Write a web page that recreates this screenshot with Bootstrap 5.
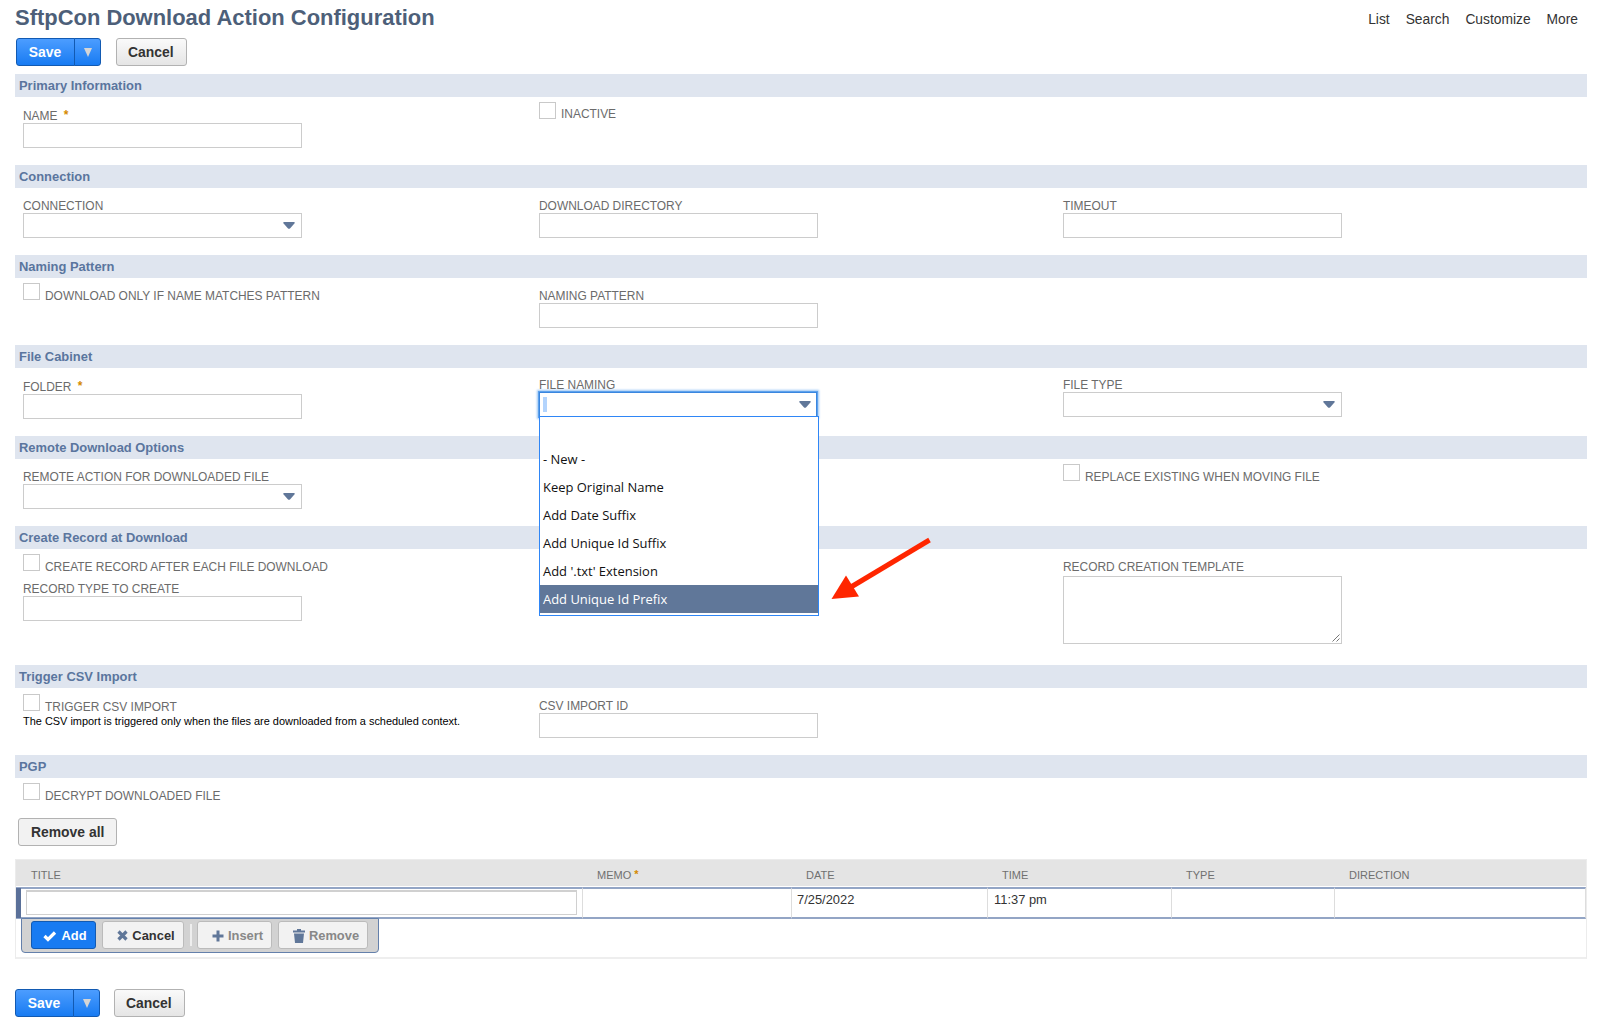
<!DOCTYPE html>
<html lang="en">
<head>
    <meta charset="UTF-8">
    <meta name="viewport" content="width=device-width, initial-scale=1.0">
    <title>SftpCon Download Action Configuration</title>
    <link href="https://cdn.jsdelivr.net/npm/bootstrap@5.3.1/dist/css/bootstrap.min.css" rel="stylesheet">
    <style>
        body { font-family: "Liberation Sans", Arial, sans-serif; font-size: 13px; color: #333; background: #fff; overflow: hidden; }
        .page { width: 1572px; margin-left: 15px; }
        .page-top { height: 38px; }
        .page-title { font-size: 21.95px; font-weight: bold; color: #4d5f79; line-height: 26px; padding-top: 5px; }
        .top-links { font-size: 13.8px; gap: 16px; padding: 11px 9px 0 0; line-height: 18px; }
        .top-links a { color: #333; text-decoration: none; }

        /* buttons */
        .ns-btn { height: 28px; padding: 0 12px 0 11px; border: 1px solid #b2b2b2; border-radius: 3px; font-size: 13.9px; font-weight: bold; line-height: 26px; color: #333; background: linear-gradient(#fafafa, #e5e5e5); }
        .ns-btn.flat { background: #f2f2f2; margin-left: 3px; padding: 0 12px; }
        .ns-save { color: #fff; border-color: #125ab2; background: linear-gradient(#4c9dff, #187bf2); }
        .ns-save.part-main { border-radius: 3px 0 0 3px; width: 59px; }
        .ns-save.part-arrow { border-radius: 0 3px 3px 0; width: 27px; margin-left: -1px; padding: 1px 0 0; }
        .save-row { gap: 15px; }
        .save-row.top { height: 36px; padding-left: 1px; }
        .save-row.bottom { margin-top: 30px; gap: 14px; }

        /* sections */
        .sec-bar { height: 23px; padding-left: 4px; background: #dfe5ef; color: #5a759e; font-size: 12.93px; font-weight: bold; line-height: 23px; }
        .sec-body { display: grid; grid-template-columns: 516px 524px 1fr; padding-left: 8px; height: 67px; }
        .sec-body.plus { height: 68px; }
        .sec-body.tall { height: 116px; }
        .sec-body.last { height: 40px; }
        .fld { padding-top: 10px; width: 279px; }
        .plus .fld { padding-top: 9px; }
        .plus .fld.req { padding-top: 11px; }
        .fld label { display: block; height: 15px; line-height: 16px; font-size: 11.95px; color: #6b6b6b; white-space: nowrap; }
        .star { color: #d48a00; font-weight: bold; margin-left: 3px; position: relative; top: -1px; }
        .box { height: 25px; border: 1px solid #ccc; background: #fff; }
        .box.pick { display: flex; align-items: center; justify-content: flex-end; padding-right: 6px; }
        .box.focus { border-color: #3a86df; box-shadow: 0 0 0 1px #5ea2ec, 0 0 2px 2px #9cc6f5; justify-content: space-between; padding: 0 5px 0 3px; width: 278px; }
        .sel-mark { width: 4px; height: 15px; background: #b3d4fd; }
        .area { height: 68px; margin-top: 2px; display: flex; align-items: flex-end; justify-content: flex-end; padding: 0 1px 1px 0; }
        .chk { display: flex; padding-top: 5px; height: 22px; gap: 5px; }
        .chk.low { padding-top: 6px; height: 23px; }
        .chk i { width: 17px; height: 17px; border: 1px solid #c9c9c9; flex: none; }
        .chk span { font-size: 11.95px; color: #6b6b6b; line-height: 16px; padding-top: 5px; white-space: nowrap; }
        .plus .chk span { padding-top: 4px; }
        .fld.below { padding-top: 10px; }
        .help { font-size: 10.95px; line-height: 13px; color: #000; white-space: nowrap; padding-top: 4px; }

        /* open list */
        .list-open { position: absolute; z-index: 5; left: 0; top: 48px; width: 280px; height: 200px; border: 1px solid #2f86f6; background: #fff; font-family: "Open Sans", sans-serif; font-size: 12.96px; color: #111; }
        .list-open div { height: 28px; line-height: 28px; padding-left: 3px; white-space: nowrap; }
        .list-open .on { background: #607799; color: #fff; }
        .pointer { position: absolute; z-index: 6; left: 290px; top: 168px; }

        /* sublist */
        .sublist { width: 1572px; height: 100px; margin-top: 13px; border: 1px solid #ececec; border-bottom: 2px solid #eee; }
        .line-row { display: grid; grid-template-columns: 567px 209px 196px 184px 163px 251px; }
        .line-head { height: 26px; background: #e4e4e4; color: #707070; font-size: 11px; line-height: 30px; margin-bottom: 1px; }
        .line-head div { padding-left: 14px; white-space: nowrap; }
        .line-head div:first-child { padding-left: 15px; }
        .line-edit { height: 32px; background: #fff; }
        .line-edit > div { border-top: 2px solid #93a5c5; border-bottom: 2px solid #93a5c5; border-right: 1px solid #ddd; padding: 3px 0 0 5px; line-height: 15px; font-size: 12.9px; }
        .line-edit > div:nth-child(4) { padding-left: 6px; }
        .line-edit > div:first-child { padding: 1px 5px 0 5px; position: relative; }
        .line-edit > div:first-child::before { content: ""; position: absolute; left: 0; top: -1px; bottom: -1px; width: 5px; background: #5a7099; }
        .line-edit .box { margin-left: 5px; height: 25px; border-color: #d0d0d0; border-top-width: 2px; }
        .line-tools { width: 358px; height: 35px; margin: -1px 0 0 5px; padding: 2px 0 0 9px; background: #d2d2d2; border: 1px solid #6480ab; border-radius: 0 0 4px 4px; position: relative; }
        .line-tools .ns-btn { display: flex; align-items: center; font-size: 12.9px; background: #f2f2f2; border-color: #bbb; white-space: nowrap; padding: 1px 0 0 6px; justify-content: center; }
        .line-tools .ns-btn.add { background: #187bf2; border-color: #125ab2; padding-left: 3px; }
        .line-tools .dim { color: #888; }
        .line-tools .sep { width: 2px; height: 22px; background: #eee; margin: 3px 5px 0 6px; }
    </style>
</head>
<body>
<svg class="d-none">
    <symbol id="caret" viewBox="0 0 12 7"><path d="M1 0H11Q12.3 .2 11.4 1.6L7.2 6.2Q6 7.4 4.8 6.2L.6 1.6Q-.3 .2 1 0Z" fill="#607799"/></symbol>
    <symbol id="down" viewBox="0 0 8 9"><path d="M0 0H8L4 9Z" fill="#d5d5d5"/></symbol>
</svg>

<div class="page">
    <div class="page-top d-flex justify-content-between">
        <h1 class="page-title mb-0">SftpCon Download Action Configuration</h1>
        <nav class="top-links d-flex"><a href="#">List</a><a href="#">Search</a><a href="#">Customize</a><a href="#">More</a></nav>
    </div>
    <div class="save-row top d-flex">
        <div class="d-flex">
            <button class="ns-btn ns-save part-main">Save</button>
            <button class="ns-btn ns-save part-arrow d-flex align-items-center justify-content-center"><svg width="8" height="9"><use href="#down"/></svg></button>
        </div>
        <button class="ns-btn">Cancel</button>
    </div>

    <div class="sec-bar">Primary Information</div>
    <div class="sec-body plus">
        <div class="fld req"><label>NAME <span class="star">*</span></label><div class="box"></div></div>
        <div class="chk"><i></i><span>INACTIVE</span></div>
    </div>

    <div class="sec-bar">Connection</div>
    <div class="sec-body">
        <div class="fld"><label>CONNECTION</label><div class="box pick"><svg width="12" height="7"><use href="#caret"/></svg></div></div>
        <div class="fld"><label>DOWNLOAD DIRECTORY</label><div class="box"></div></div>
        <div class="fld"><label>TIMEOUT</label><div class="box"></div></div>
    </div>

    <div class="sec-bar">Naming Pattern</div>
    <div class="sec-body">
        <div class="chk"><i></i><span>DOWNLOAD ONLY IF NAME MATCHES PATTERN</span></div>
        <div class="fld"><label>NAMING PATTERN</label><div class="box"></div></div>
    </div>

    <div class="sec-bar">File Cabinet</div>
    <div class="sec-body plus">
        <div class="fld req"><label>FOLDER <span class="star">*</span></label><div class="box"></div></div>
        <div class="fld position-relative">
            <label>FILE NAMING</label>
            <div class="box pick focus"><span class="sel-mark"></span><svg width="12" height="7"><use href="#caret"/></svg></div>
            <div class="list-open">
                <div></div>
                <div>- New -</div>
                <div>Keep Original Name</div>
                <div>Add Date Suffix</div>
                <div>Add Unique Id Suffix</div>
                <div>Add '.txt' Extension</div>
                <div class="on">Add Unique Id Prefix</div>
            </div>
            <svg class="pointer" width="106" height="70"><path d="M100.500 4L22 51" stroke="#ff2600" stroke-width="5"/><path d="M2.500 63L17 39.500L30 60.500Z" fill="#ff2600"/></svg>
        </div>
        <div class="fld"><label>FILE TYPE</label><div class="box pick"><svg width="12" height="7"><use href="#caret"/></svg></div></div>
    </div>

    <div class="sec-bar">Remote Download Options</div>
    <div class="sec-body">
        <div class="fld"><label>REMOTE ACTION FOR DOWNLOADED FILE</label><div class="box pick"><svg width="12" height="7"><use href="#caret"/></svg></div></div>
        <div></div>
        <div class="chk"><i></i><span>REPLACE EXISTING WHEN MOVING FILE</span></div>
    </div>

    <div class="sec-bar">Create Record at Download</div>
    <div class="sec-body tall">
        <div>
            <div class="chk"><i></i><span>CREATE RECORD AFTER EACH FILE DOWNLOAD</span></div>
            <div class="fld below"><label>RECORD TYPE TO CREATE</label><div class="box"></div></div>
        </div>
        <div></div>
        <div class="fld"><label>RECORD CREATION TEMPLATE</label>
            <div class="box area"><svg width="8" height="8"><path d="M.5 7.500L7.500 .5M4.500 7.500L7.500 4.500" stroke="#777" fill="none"/></svg></div>
        </div>
    </div>

    <div class="sec-bar">Trigger CSV Import</div>
    <div class="sec-body">
        <div>
            <div class="chk low"><i></i><span>TRIGGER CSV IMPORT</span></div>
            <div class="help">The CSV import is triggered only when the files are downloaded from a scheduled context.</div>
        </div>
        <div class="fld"><label>CSV IMPORT ID</label><div class="box"></div></div>
    </div>

    <div class="sec-bar">PGP</div>
    <div class="sec-body last">
        <div class="chk"><i></i><span>DECRYPT DOWNLOADED FILE</span></div>
    </div>
    <button class="ns-btn flat d-block">Remove all</button>

    <div class="sublist">
        <div class="line-row line-head">
            <div>TITLE</div><div>MEMO<span class="star ms-0"> *</span></div><div>DATE</div><div>TIME</div><div>TYPE</div><div>DIRECTION</div>
        </div>
        <div class="line-row line-edit">
            <div><div class="box"></div></div><div></div><div>7/25/2022</div><div>11:37 pm</div><div></div><div></div>
        </div>
        <div class="line-tools d-flex">
            <button class="ns-btn ns-save add" style="width:65px"><svg class="me-1" width="14" height="12"><path d="M1.500 6L5 9.500L12 2.500" stroke="#fff" stroke-width="3.200" fill="none"/></svg>Add</button>
            <button class="ns-btn" style="width:82px;margin-left:6px"><svg class="me-1" width="11" height="11"><path d="M1.500 1.500L9.500 9.500M9.500 1.500L1.500 9.500" stroke="#607799" stroke-width="3.200"/></svg>Cancel</button>
            <span class="sep"></span>
            <button class="ns-btn dim" style="width:75px"><svg class="me-1" width="12" height="12"><path d="M6 .5V11.500M.5 6H11.500" stroke="#607799" stroke-width="3"/></svg>Insert</button>
            <button class="ns-btn dim" style="width:90px;margin-left:6px"><svg class="me-1" width="12" height="14"><path d="M0 1.500H4V0H8V1.500H12V3.500H0ZM1 4.500H11L10 14H2Z" fill="#607799"/></svg>Remove</button>
        </div>
    </div>

    <div class="save-row bottom d-flex">
        <div class="d-flex">
            <button class="ns-btn ns-save part-main">Save</button>
            <button class="ns-btn ns-save part-arrow d-flex align-items-center justify-content-center"><svg width="8" height="9"><use href="#down"/></svg></button>
        </div>
        <button class="ns-btn">Cancel</button>
    </div>
</div>
<script src="https://cdn.jsdelivr.net/npm/bootstrap@5.3.1/dist/js/bootstrap.bundle.min.js"></script>
</body>
</html>
